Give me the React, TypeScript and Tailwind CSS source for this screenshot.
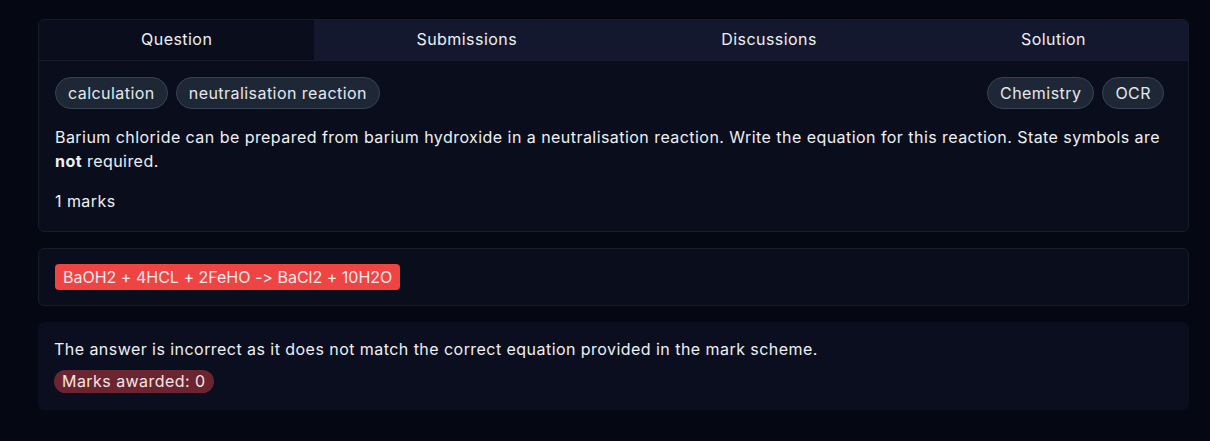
import React from 'react';

const TABS = ['Question', 'Submissions', 'Discussions', 'Solution'];

function Pill({ children }: { children: React.ReactNode }) {
  return (
    <span className="rounded-full border border-[#3a4354] bg-[#1e2736] px-3 py-[3px] text-[#e5e7eb]">
      {children}
    </span>
  );
}

export default function App() {
  return (
    <div
      className="min-h-screen bg-[#050712] pb-8 pl-[38px] pr-[21px] pt-[19px] text-[16px] leading-6 tracking-[0.45px] text-[#eef0f4] [font-feature-settings:'calt'_0]"
      style={{ fontFamily: 'Inter, "Noto Sans", sans-serif' }}
    >
      <div className="overflow-hidden rounded-md border border-[#161c2a] bg-[#0a0e1c]">
        <div className="flex h-[40px] items-center bg-[#13182f]">
          {TABS.map((t, i) => (
            <div
              key={t}
              className={`flex h-full flex-auto items-center justify-center pb-[3px] ${
                i === 0 ? 'bg-[#0a0e1c]' : ''
              }`}
            >
              {t}
            </div>
          ))}
        </div>
        <div className="border-t border-[#161c2a] pb-[18px] pl-4 pr-4 pt-4">
          <div className="flex items-center justify-between pr-2">
            <div className="flex gap-2">
              <Pill>calculation</Pill>
              <Pill>neutralisation reaction</Pill>
            </div>
            <div className="flex gap-2">
              <Pill>Chemistry</Pill>
              <Pill>OCR</Pill>
            </div>
          </div>
          <p className="mt-4">
            Barium chloride can be prepared from barium hydroxide in a neutralisation reaction. Write
            the equation for this reaction. State symbols are <strong>not</strong> required.
          </p>
          <p className="mt-4">1 marks</p>
        </div>
      </div>

      <div className="mt-4 rounded-md border border-[#161c2a] bg-[#0a0e1c] px-4 py-[15px]">
        <span className="inline-block rounded bg-[#ef4444] px-2 py-px tracking-normal text-[#fde8ec]">
          BaOH2 + 4HCL + 2FeHO -&gt; BaCl2 + 10H2O
        </span>
      </div>

      <div className="mt-4 rounded-md bg-[#0a0e1e] px-4 pb-[17px] pt-[15px]">
        <p>The answer is incorrect as it does not match the correct equation provided in the mark scheme.</p>
        <span className="mt-[9px] inline-block rounded-full bg-[#6b2530] px-2 leading-[23px] text-[#f3e4e6]">
          Marks awarded: 0
        </span>
      </div>
    </div>
  );
}
